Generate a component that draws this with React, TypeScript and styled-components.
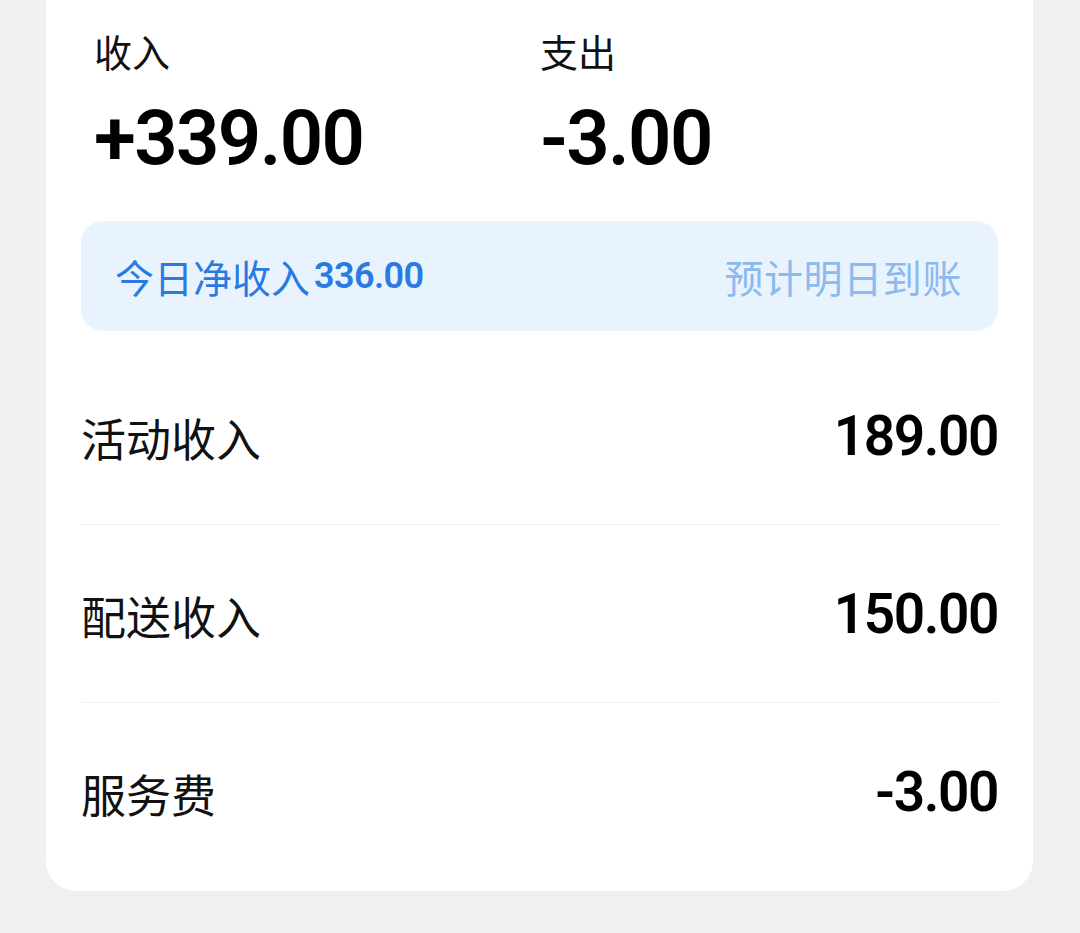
import React from 'react';
import styled, { createGlobalStyle } from 'styled-components';

const GlobalStyle = createGlobalStyle`
  html, body {
    margin: 0;
    padding: 0;
    background: #f0f0f0;
    font-family: "Noto Sans CJK SC", "Noto Sans", sans-serif;
  }
`;

const Page = styled.div`
  width: 1080px;
  height: 933px;
  overflow: hidden;
  background: #f0f0f0;
`;

const Card = styled.div`
  margin: 0 47px 0 46px;
  padding: 0 35px 11px;
  background: #ffffff;
  border-radius: 0 0 30px 30px;
`;

const Stats = styled.div`
  display: grid;
  grid-template-columns: 446px 1fr;
  padding: 28px 13px 0;
`;

const Stat = styled.div`
  display: flex;
  flex-direction: column;
`;

const StatLabel = styled.div`
  font-size: 38px;
  line-height: 46px;
  color: #111;
`;

const StatValue = styled.div`
  margin-top: 24px;
  font-family: Roboto, "Liberation Sans", sans-serif;
  font-weight: 600;
  font-size: 76px;
  line-height: 80px;
  letter-spacing: -1.6px;
  color: #000;
`;

const NetBox = styled.div`
  margin-top: 43px;
  height: 110px;
  padding: 0 36px;
  display: flex;
  align-items: center;
  justify-content: space-between;
  background: #e8f3fe;
  border-radius: 22px;
`;

const NetText = styled.div`
  display: flex;
  align-items: center;
  color: #2a7ae2;
  font-size: 39px;
  margin-left: -2px;
`;

const NetAmount = styled.span`
  margin-left: 4px;
  font-family: Roboto, "Liberation Sans", sans-serif;
  font-weight: 600;
  font-size: 36px;
  letter-spacing: -0.6px;
`;

const NetHint = styled.div`
  color: #8cb9ee;
  font-size: 39px;
  letter-spacing: 0.6px;
`;

const List = styled.div`
  margin-top: 16px;
`;

const Row = styled.div`
  height: 177px;
  display: flex;
  align-items: center;
  justify-content: space-between;
  border-bottom: 1px solid #efefef;

  &:last-child {
    border-bottom: none;
  }
`;

const RowLabel = styled.div`
  font-size: 45px;
  color: #111;
  margin-top: 4px;
`;

const RowValue = styled.div`
  font-family: Roboto, "Liberation Sans", sans-serif;
  font-weight: 600;
  font-size: 55px;
  letter-spacing: -1.4px;
  color: #000;
`;

const rows = [
  { label: '活动收入', value: '189.00' },
  { label: '配送收入', value: '150.00' },
  { label: '服务费', value: '-3.00' },
];

const App: React.FC = () => (
  <Page>
    <GlobalStyle />
    <Card>
      <Stats>
        <Stat>
          <StatLabel>收入</StatLabel>
          <StatValue>+339.00</StatValue>
        </Stat>
        <Stat>
          <StatLabel>支出</StatLabel>
          <StatValue>-3.00</StatValue>
        </Stat>
      </Stats>
      <NetBox>
        <NetText>
          今日净收入<NetAmount>336.00</NetAmount>
        </NetText>
        <NetHint>预计明日到账</NetHint>
      </NetBox>
      <List>
        {rows.map((r) => (
          <Row key={r.label}>
            <RowLabel>{r.label}</RowLabel>
            <RowValue>{r.value}</RowValue>
          </Row>
        ))}
      </List>
    </Card>
  </Page>
);

export default App;
